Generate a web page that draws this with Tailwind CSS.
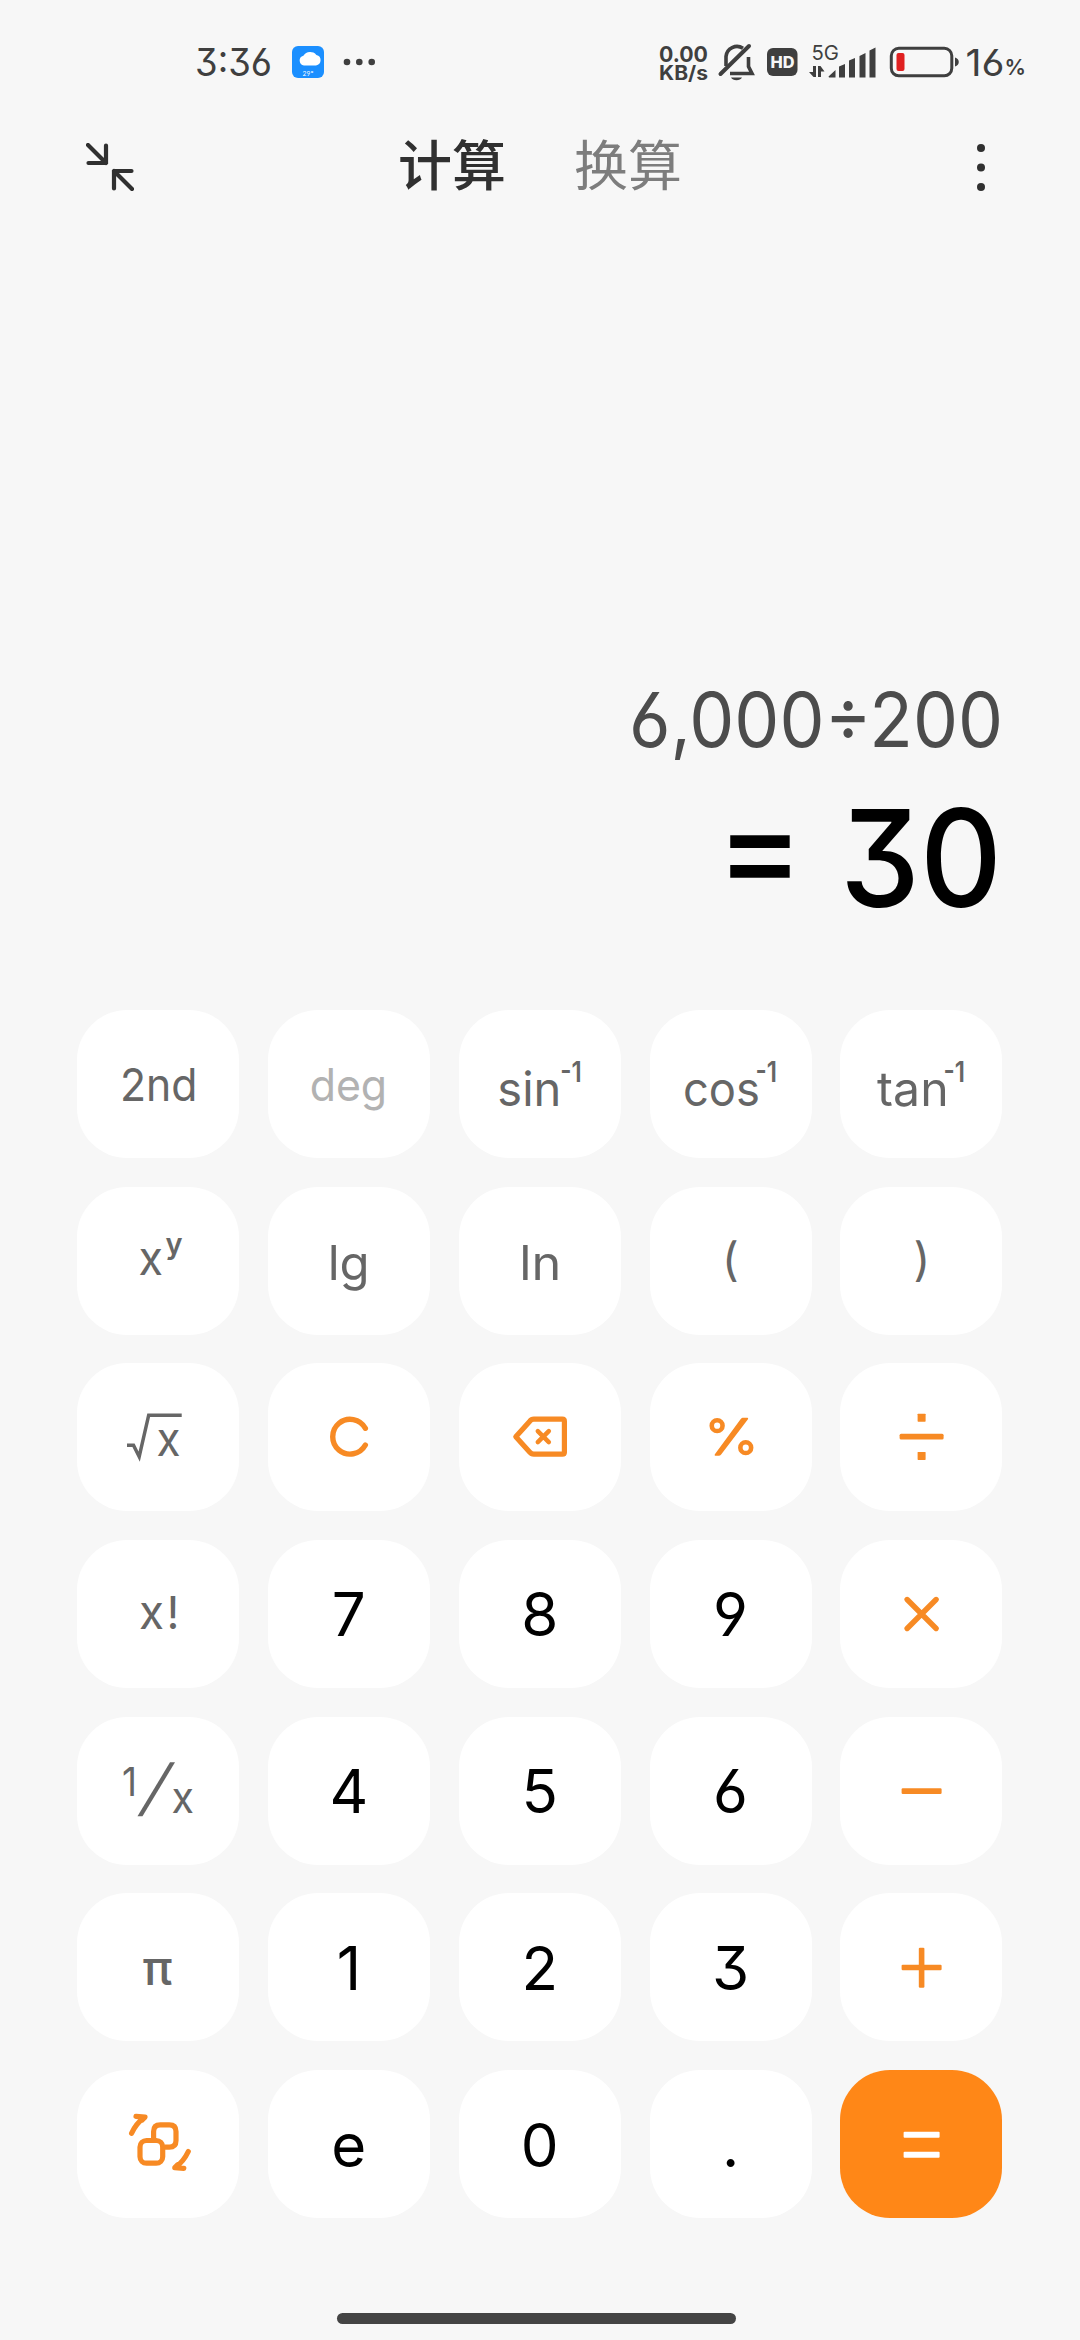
<!DOCTYPE html>
<html lang="zh-CN">
<head>
    <meta charset="UTF-8">
    <meta name="viewport" content="width=device-width, initial-scale=1.0">
    <title>计算器</title>
    <script src="https://cdn.jsdelivr.net/npm/@tailwindcss/browser@4"></script>
</head>
<body class="bg-[#f7f7f7] w-[1080px] h-[2340px] overflow-hidden flex flex-col font-['Inter','Noto_Sans_CJK_SC',sans-serif] [font-feature-settings:'cv03','cv04','cv09']">

    <!-- Status bar -->
    <div class="h-[124px] shrink-0 flex items-center text-[#3f3f3f]">
        <svg class="w-[1080px] h-[124px]" viewBox="0 0 1080 124" fill="none">
            <text x="195" y="76" font-size="38" textLength="77" lengthAdjust="spacingAndGlyphs" fill="#3f3f3f">3:36</text>

            <!-- Weather -->
            <rect x="292" y="46" width="32" height="32" rx="6" fill="#1b8fff"/>
            <path d="M304 65.5a5 5 0 0 1-.6-9.800a8 8 0 0 1 13-.8a5.400 5.400 0 0 1-.4 10.600z" fill="#fff"/>
            <text x="302.500" y="76" font-size="6.500" textLength="11" fill="#fff">29°</text>

            <g fill="#3f3f3f">
                <circle cx="347" cy="62" r="3.300"/>
                <circle cx="359.300" cy="62" r="3.300"/>
                <circle cx="371.700" cy="62" r="3.300"/>
            </g>

            <!-- Network speed -->
            <text x="659" y="62" font-size="22" font-weight="700" textLength="49" lengthAdjust="spacingAndGlyphs" fill="#3f3f3f">0.00</text>
            <text x="659" y="80" font-size="19.500" font-weight="700" textLength="49" lengthAdjust="spacingAndGlyphs" fill="#3f3f3f">KB/s</text>

            <!-- Muted bell -->
            <path d="M726 66V56.500a11 11 0 0 1 17-8.200M748.500 57v9.500l3.500 7H730" stroke="#3f3f3f" stroke-width="3.600"/>
            <path d="M720.500 74L749 46" stroke="#3f3f3f" stroke-width="4" stroke-linecap="round"/>
            <path d="M731 77.500h11a6 4.500 0 0 1-11 0z" fill="#3f3f3f"/>

            <!-- HD -->
            <rect x="767" y="48" width="30.500" height="28" rx="6" fill="#3f3f3f"/>
            <text x="770.500" y="68" font-size="16" font-weight="800" textLength="24" lengthAdjust="spacingAndGlyphs" fill="#f7f7f7">HD</text>

            <!-- Signal -->
            <text x="811.500" y="60" font-size="20" textLength="27.500" lengthAdjust="spacingAndGlyphs" fill="#3f3f3f">5G</text>
            <g fill="#3f3f3f">
                <path d="M813 77V66h3v11h-2.500l-4.500-5h4zM818 77V66h2.500l4 5.500h-3.500V77z"/>
                <path d="M828.500 76.500l7-6.500v7.500h-6.500zM839 66.500l6-2.500v13.500h-6zM849 60.500l6-2.500v19.500h-6zM859.500 56l6-3v24.500h-6zM869.500 50.500l6-3v30h-6z"/>
            </g>

            <!-- Battery -->
            <rect x="891.300" y="48.300" width="60.500" height="27.500" rx="7.500" stroke="#3f3f3f" stroke-width="3"/>
            <rect x="896.500" y="53" width="8" height="18" rx="2" fill="#e02020"/>
            <path d="M955 57.500c5 1 5 8 0 9z" fill="#3f3f3f"/>
            <text x="965.500" y="76" font-size="37" textLength="39" lengthAdjust="spacingAndGlyphs" fill="#3f3f3f">16</text>
            <text x="1004.500" y="75" font-size="22" font-weight="600" textLength="21.500" lengthAdjust="spacingAndGlyphs" fill="#3f3f3f">%</text>
        </svg>
    </div>

    <!-- Header -->
    <header class="h-[86px] shrink-0 flex items-center pl-[86px] pr-[95px] text-[54px] leading-none">
        <svg class="w-12 h-12" viewBox="86 143 48 48" fill="none" stroke="#303030" stroke-width="4.200" stroke-linecap="round" stroke-linejoin="round">
            <path d="M88 145l18 18M106 145.500V163H88.500M132 189l-18-18M114 188.500V171h17.500"/>
        </svg>
        <div class="flex gap-[68px] ml-[264px]">
            <span class="text-[#303030] font-medium">计算</span>
            <span class="text-[#7d7d7d]">换算</span>
        </div>
        <svg class="w-2 h-[47px] ml-auto" viewBox="0 0 8 47" fill="#303030">
            <circle cx="4" cy="4" r="4"/>
            <circle cx="4" cy="23.500" r="4"/>
            <circle cx="4" cy="43" r="4"/>
        </svg>
    </header>

    <!-- Result -->
    <main class="h-[800px] shrink-0 flex flex-col justify-end items-end pr-[58px]">
        <svg class="w-[500px] h-[350px]" viewBox="522 660 500 350">
            <text x="629" y="747" font-size="75.500" textLength="374" lengthAdjust="spacingAndGlyphs" fill="#4c4c4c">6,000÷200</text>
            <text x="716.500" y="895" font-size="135" font-weight="500" textLength="87" lengthAdjust="spacingAndGlyphs">=</text>
            <text x="840" y="906.500" font-size="135" font-weight="450" textLength="162" lengthAdjust="spacingAndGlyphs">30</text>
        </svg>
    </main>

    <!-- Keypad -->
    <div class="grid grid-cols-5 auto-rows-[148px] gap-x-[28.85px] gap-y-[28.67px] pl-[77px] pr-[77.6px] shrink-0 text-[60px] leading-none text-black fill-[#666] [&>button]:bg-white [&>button]:rounded-[50px] [&_svg]:w-full [&_svg]:h-full">
        <button><svg viewBox="77 1010 162 148"><text x="120" y="1100.500" font-size="45.500" textLength="77.500" lengthAdjust="spacingAndGlyphs">2nd</text></svg></button>
        <button><svg viewBox="267.850 1010 162 148"><text x="309.500" y="1100.500" font-size="44.500" textLength="77.500" lengthAdjust="spacingAndGlyphs" fill="#b2b2b2">deg</text></svg></button>
        <button><svg viewBox="458.700 1010 162 148">
            <text x="497" y="1106" font-size="48" textLength="64" lengthAdjust="spacingAndGlyphs">sin</text>
            <text x="560" y="1082" font-size="28" font-weight="600" textLength="21.500" lengthAdjust="spacingAndGlyphs">-1</text>
        </svg></button>
        <button><svg viewBox="649.550 1010 162 148">
            <text x="682.500" y="1106" font-size="48" textLength="77" lengthAdjust="spacingAndGlyphs">cos</text>
            <text x="755" y="1082" font-size="28" font-weight="600" textLength="21.500" lengthAdjust="spacingAndGlyphs">-1</text>
        </svg></button>
        <button><svg viewBox="840.400 1010 162 148">
            <text x="877.500" y="1106" font-size="48" textLength="71.500" lengthAdjust="spacingAndGlyphs">tan</text>
            <text x="944" y="1082" font-size="28" font-weight="600" textLength="21.500" lengthAdjust="spacingAndGlyphs">-1</text>
        </svg></button>

        <button><svg viewBox="77 1186.670 162 148">
            <text x="138.500" y="1275" font-size="47.500" textLength="24.500" lengthAdjust="spacingAndGlyphs">x</text>
            <text x="165.500" y="1254" font-size="29" font-weight="600">y</text>
        </svg></button>
        <button><svg viewBox="267.850 1186.670 162 148"><text x="327.500" y="1280" font-size="48" textLength="42" lengthAdjust="spacingAndGlyphs">lg</text></svg></button>
        <button><svg viewBox="458.700 1186.670 162 148"><text x="519" y="1280" font-size="48" textLength="42" lengthAdjust="spacingAndGlyphs">ln</text></svg></button>
        <button><svg viewBox="649.550 1186.670 162 148"><text x="721.500" y="1276" font-size="46">(</text></svg></button>
        <button><svg viewBox="840.400 1186.670 162 148"><text x="914" y="1276" font-size="46">)</text></svg></button>

        <button><svg viewBox="77 1363.330 162 148">
            <path d="M127 1445.500h6.500l5.700 11.500 9.500-41.500h33" fill="none" stroke="#666" stroke-width="3.500"/>
            <text x="156.500" y="1456" font-size="47.500" textLength="24" lengthAdjust="spacingAndGlyphs">x</text>
        </svg></button>
        <button><svg viewBox="267.850 1363.330 162 148"><path d="M365.200 1428.600a17.400 17.400 0 1 0 0 16.800" fill="none" stroke="#f78a24" stroke-width="5.400" stroke-linecap="round"/></svg></button>
        <button><svg viewBox="458.700 1363.330 162 148" fill="none" stroke="#f78a24" stroke-width="5.200" stroke-linejoin="round" stroke-linecap="round">
            <path d="M515.500 1437l14-15.500q1.500-2 4-2h28.500q2.100 0 2.100 2v31q0 2-2.100 2h-28.500q-2.500 0-4-2z"/>
            <path d="M537.500 1431.500l11 11M548.500 1431.500l-11 11" stroke-width="4.500"/>
        </svg></button>
        <button><svg viewBox="649.550 1363.330 162 148" fill="none" stroke="#f78a24">
            <circle cx="716.700" cy="1426" r="5.400" stroke-width="4.600"/>
            <circle cx="745.300" cy="1448" r="5.400" stroke-width="4.600"/>
            <path d="M742 1418.200h4.800q1.500 0 .7 1.300l-26.800 35.300q-1 1.400-2.500 1.400h-2.800q-2 0-.8-1.800l25.500-34.700q1-1.500 1.900-1.500z" fill="#f78a24" stroke="none"/>
        </svg></button>
        <button><svg viewBox="840.400 1363.330 162 148" fill="#f78a24">
            <rect x="900" y="1434" width="44" height="5.800" rx="1.500"/>
            <rect x="918" y="1414" width="8" height="8" rx=".6"/>
            <rect x="918" y="1452.300" width="8" height="8" rx=".6"/>
        </svg></button>

        <button><svg viewBox="77 1540 162 148">
            <text x="139" y="1628.500" font-size="47.500" textLength="25" lengthAdjust="spacingAndGlyphs">x</text>
            <text x="166.500" y="1628.500" font-size="45">!</text>
        </svg></button>
        <button>7</button>
        <button>8</button>
        <button>9</button>
        <button><svg viewBox="840.400 1540 162 148"><path d="M907.500 1599.500l29 29M936.500 1599.500l-29 29" fill="none" stroke="#f78a24" stroke-width="5.400" stroke-linecap="round"/></svg></button>

        <button><svg viewBox="77 1716.670 162 148">
            <text x="122" y="1795.500" font-size="40" textLength="15" lengthAdjust="spacingAndGlyphs">1</text>
            <path d="M170 1762h5l-32.500 54h-5z"/>
            <text x="171.500" y="1813" font-size="43" textLength="22.500" lengthAdjust="spacingAndGlyphs">x</text>
        </svg></button>
        <button>4</button>
        <button>5</button>
        <button>6</button>
        <button><svg viewBox="840.400 1716.670 162 148" fill="#f78a24"><rect x="902" y="1788" width="40" height="5.600" rx="1.200"/></svg></button>

        <button><svg viewBox="77 1893.330 162 148"><text x="142.500" y="1985" font-size="47" font-weight="500" textLength="30" lengthAdjust="spacingAndGlyphs">π</text></svg></button>
        <button class="pt-px">1</button>
        <button class="pt-px">2</button>
        <button class="pt-px">3</button>
        <button><svg viewBox="840.400 1893.330 162 148" fill="#f78a24">
            <rect x="902" y="1965" width="40" height="5.600" rx="1.200"/>
            <rect x="919.200" y="1948" width="5.600" height="40" rx="1.200"/>
        </svg></button>

        <button><svg viewBox="77 2070 162 148" fill="none" stroke="#f78a24" stroke-width="5.200" stroke-linecap="round" stroke-linejoin="round">
            <rect x="140" y="2140.500" width="22.700" height="22.700" rx="6.500"/>
            <path d="M153.600 2139v-7.500q0-6.700 6.700-6.700h9q6.700 0 6.700 6.700v9q0 6.700-6.700 6.700h-5" stroke-linecap="butt"/>
            <path d="M131.600 2133.300q4.200-9.800 12.900-16M136 2116.300l9 .8-3 3"/>
            <path d="M188.300 2151.500q-4.700 10-13 16M183.800 2168.300l-9-.6 3-3"/>
        </svg></button>
        <button class="pt-[3px]">e</button>
        <button class="pt-[3px]">0</button>
        <button class="pt-[3px]">.</button>
        <button class="bg-[#ff8717]!"><svg viewBox="840.400 2070 162 148" fill="#fff">
            <rect x="904" y="2131.700" width="36" height="6" rx="1"/>
            <rect x="904" y="2151.700" width="36" height="6" rx="1"/>
        </svg></button>
    </div>

    <!-- Home indicator -->
    <div class="w-[399px] h-[11px] mt-auto mb-4 ml-[337px] shrink-0 rounded-full bg-[#444]"></div>
</body>
</html>
